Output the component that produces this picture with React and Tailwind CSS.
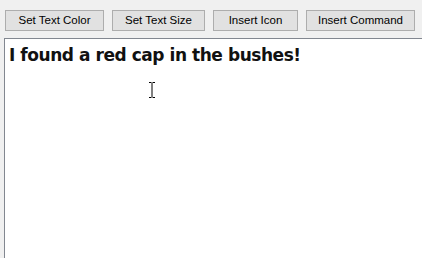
import React from "react";

const buttons = [
	{ label: "Set Text Color", w: "w-[99px]" },
	{ label: "Set Text Size", w: "w-[93px]" },
	{ label: "Insert Icon", w: "w-[85px]" },
	{ label: "Insert Command", w: "w-[109px]" },
];

function TextCursor() {
	return (
		<svg className="absolute left-[143px] top-[43px]" width="8" height="16" viewBox="0 0 8 16">
			<path d="M1 0.5h2.5M4.5 0.5h2.5M4 1v14M1 15.5h2.5M4.5 15.5h2.5" stroke="#000" strokeWidth="1" fill="none" />
		</svg>
	);
}

export default function App() {
	return (
		<div className="w-[422px] h-[258px] bg-[#f0f0f0] overflow-hidden font-['Liberation_Sans',sans-serif]">
			<div className="flex gap-[8px] pl-[5px] pt-[10px] h-[38px]">
				{buttons.map((b) => (
					<button
						key={b.label}
						className={`${b.w} h-[21px] bg-[#e1e1e1] border border-[#adadad] text-[11.5px] text-black leading-none`}
					>
						{b.label}
					</button>
				))}
			</div>
			<div className="relative ml-[4px] h-[220px] bg-white border-t border-l border-[#828790] pl-[4px] pt-[6px]">
				<p className="font-['DejaVu_Sans',sans-serif] font-bold text-[17px] leading-[20px] text-[#111] tracking-[-0.45px]">
					I found a red cap in the bushes!
				</p>
				<TextCursor />
			</div>
		</div>
	);
}
